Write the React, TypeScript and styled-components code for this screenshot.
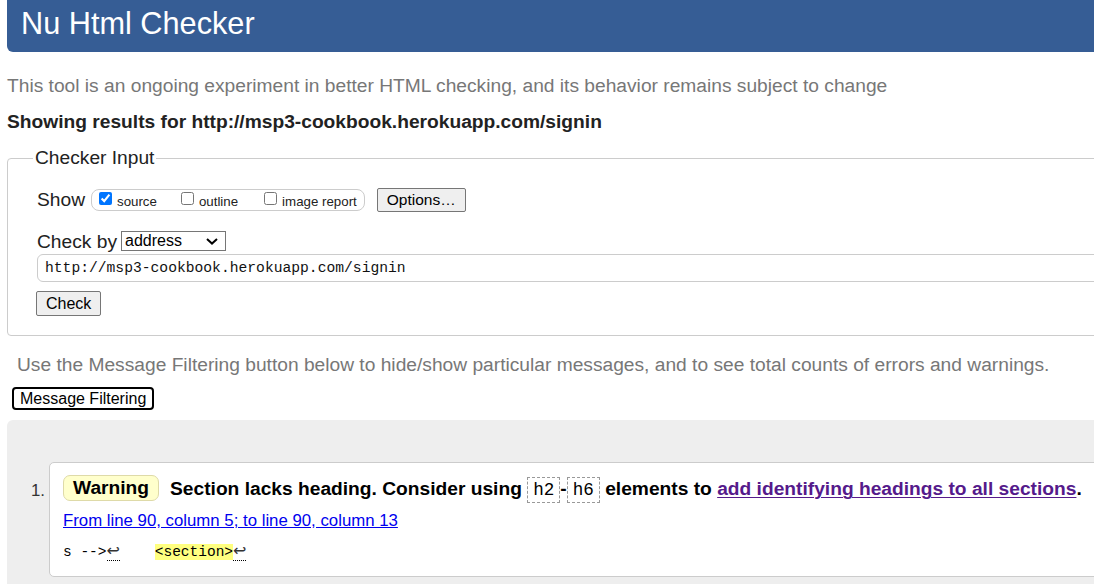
import { useState } from 'react'
import styled, { createGlobalStyle } from 'styled-components'

const GlobalStyle = createGlobalStyle`
	html, body {
		margin: 0;
		padding: 0;
		background: #fff;
		overflow: hidden;
	}
	body {
		font-family: 'Liberation Sans', Arial, sans-serif;
		color: #222;
	}
`

const sans = `'Liberation Sans', Arial, sans-serif`
const mono = `'Liberation Mono', 'DejaVu Sans Mono', monospace`

const Page = styled.div`
	width: 1130px;
	padding-left: 7px;
`

const Header = styled.h1`
	margin: 0;
	height: 52px;
	background: #365d95;
	border-radius: 0 0 0 6px;
	color: #fff;
	font: 400 30.7px/48px ${sans};
	padding-left: 14px;
`

const Intro = styled.p`
	margin: 23px 0 0;
	font: 400 19.2px/22px ${sans};
	color: #777;
`

const ResultsFor = styled.p`
	margin: 14px 0 0;
	font: 700 19.2px/22px ${sans};
	color: #222;
`

const Fieldset = styled.fieldset`
	margin: 14px 0 0;
	padding: 19px 0 19px 29px;
	border: 1px solid #ccc;
	border-radius: 4px;
	min-inline-size: 0;
`

const Legend = styled.legend`
	font: 400 19.2px/22px ${sans};
	color: #222;
	padding: 0 2px;
	margin-left: -4px;
`

const Row = styled.div`
	display: flex;
	align-items: center;
	height: 24px;
`

const FieldLabel = styled.span<{ $shift?: number }>`
	font: 400 19.2px/22px ${sans};
	color: #222;
	position: relative;
	top: ${({ $shift }) => $shift ?? 0}px;
`

const ShowGroup = styled.div`
	display: flex;
	align-items: center;
	box-sizing: border-box;
	height: 22px;
	border: 1px solid #ccc;
	border-radius: 8px;
	padding: 0 7px;
	margin-left: 6px;
`

const CheckItem = styled.label<{ $gap: number }>`
	display: inline-flex;
	align-items: center;
	font: 400 13.3px/16px ${sans};
	color: #222;
	margin-right: ${({ $gap }) => $gap}px;
	input {
		width: 13px;
		height: 13px;
		margin: -3px 5px 0 0;
		accent-color: #0075ff;
	}
	span {
		padding-top: 4px;
	}
`

const NativeButton = styled.button`
	box-sizing: border-box;
	font: 400 16px/20px ${sans};
	color: #000;
	background: #efefef;
	border: 1px solid #767676;
	border-radius: 2px;
	padding: 0 9px;
	height: 25px;
`

const OptionsButton = styled(NativeButton)`
	margin-left: 12px;
	height: 24px;
	font-size: 15.5px;
`

const CheckByRow = styled(Row)`
	margin-top: 18px;
	height: 22px;
`

const SelectWrap = styled.div`
	position: relative;
	display: inline-block;
	margin-left: 4px;
`

const Select = styled.select`
	appearance: none;
	display: block;
	box-sizing: border-box;
	width: 105px;
	height: 20px;
	font: 400 16px/18px ${sans};
	color: #000;
	background: #fff;
	border: 1px solid #767676;
	border-radius: 0;
	padding: 0 0 0 3px;
	margin: 0;
`

const Chevron = styled.svg`
	position: absolute;
	right: 8px;
	top: 7px;
	pointer-events: none;
`

const UrlInput = styled.input`
	display: block;
	box-sizing: border-box;
	width: 1100px;
	height: 28px;
	margin: 2px 0 0;
	padding: 0 7px;
	border: 1px solid #ccc;
	border-radius: 6px;
	font: 400 14.67px/26px ${mono};
	color: #111;
	outline: none;
`

const CheckButton = styled(NativeButton)`
	display: block;
	margin: 9px 0 0 -1px;
`

const FilterHint = styled.p`
	margin: 18px 0 0 10px;
	font: 400 19.2px/22px ${sans};
	color: #777;
`

const FilterButton = styled.button`
	display: block;
	box-sizing: border-box;
	margin: 11px 0 0 5px;
	height: 23px;
	padding: 0 6px;
	font: 400 16px/19px ${sans};
	color: #000;
	background: #fff;
	border: 2px solid #000;
	border-radius: 4px;
`

const Results = styled.div`
	margin-top: 10px;
	background: #eee;
	border-radius: 6px 0 0 0;
	padding: 42px 0 10px 42px;
	min-height: 140px;
`

const MessageList = styled.ol`
	margin: 0;
	padding: 0;
	list-style: none;
`

const MessageItem = styled.li`
	display: flex;
	align-items: flex-start;
`

const ItemNumber = styled.span`
	width: 18px;
	margin-left: -18px;
	padding-top: 19px;
	font: 400 16.8px/20px ${sans};
	color: #333;
`

const Card = styled.div`
	flex: 1;
	background: #fff;
	border: 1px solid #ccc;
	border-radius: 5px;
	padding: 12px 13px 14px;
`

const MessageLine = styled.p`
	margin: 0;
	display: flex;
	align-items: center;
	height: 28px;
	font: 700 19.2px/22px ${sans};
	color: #000;
	white-space: pre;
`

const Badge = styled.strong`
	align-self: flex-start;
	box-sizing: border-box;
	height: 26px;
	background: #ffffcc;
	border: 1px solid #dedaa8;
	border-radius: 7px;
	padding: 1px 9px 0;
	margin-right: 11px;
	font: 700 19.2px/22px ${sans};
	color: #000;
`

const CodeTag = styled.code`
	align-self: flex-end;
	box-sizing: border-box;
	height: 26px;
	border: 1px dashed #999;
	padding: 0 5px;
	font: 400 17.6px/24px ${mono};
	color: #000;
`

const HelpLink = styled.a`
	color: #551a8b;
	text-decoration: underline;
	text-decoration-thickness: 1px;
	text-underline-offset: 2px;
`

const Location = styled.a`
	display: inline-block;
	margin-top: 8px;
	font: 400 16.8px/20px ${sans};
	color: #0000ee;
	text-decoration: underline;
`

const Extract = styled.pre`
	margin: 10px 0 0;
	font: 400 14.5px/20px ${mono};
	color: #000;
`

const LineBreak = styled.span`
	border-bottom: 1px dotted #000;
	color: #333;
	font-family: 'DejaVu Sans', sans-serif;
	font-size: 16px;
`

const Highlight = styled.b`
	font-weight: 400;
	background: #ffff80;
`

export default function App() {
	const [show, setShow] = useState({ source: true, outline: false, image: false })

	return (
		<Page>
			<GlobalStyle />
			<Header>Nu Html Checker</Header>
			<Intro>
				This tool is an ongoing experiment in better HTML checking, and its behavior remains
				subject to change
			</Intro>
			<ResultsFor>Showing results for http://msp3-cookbook.herokuapp.com/signin</ResultsFor>

			<Fieldset>
				<Legend>Checker Input</Legend>
				<Row>
					<FieldLabel>Show</FieldLabel>
					<ShowGroup>
						<CheckItem $gap={24}>
							<input
								type="checkbox"
								checked={show.source}
								onChange={() => setShow({ ...show, source: !show.source })}
							/>
							<span>source</span>
						</CheckItem>
						<CheckItem $gap={26}>
							<input
								type="checkbox"
								checked={show.outline}
								onChange={() => setShow({ ...show, outline: !show.outline })}
							/>
							<span>outline</span>
						</CheckItem>
						<CheckItem $gap={0}>
							<input
								type="checkbox"
								checked={show.image}
								onChange={() => setShow({ ...show, image: !show.image })}
							/>
							<span>image report</span>
						</CheckItem>
					</ShowGroup>
					<OptionsButton>Options…</OptionsButton>
				</Row>
				<CheckByRow>
					<FieldLabel $shift={1}>Check by</FieldLabel>
					<SelectWrap>
						<Select defaultValue="address">
							<option value="address">address</option>
							<option value="file">file upload</option>
							<option value="text">text input</option>
						</Select>
						<Chevron width="12" height="7" viewBox="0 0 12 7">
							<path d="M1 1l5 4.6L11 1" fill="none" stroke="#000" strokeWidth="2" />
						</Chevron>
					</SelectWrap>
				</CheckByRow>
				<UrlInput defaultValue="http://msp3-cookbook.herokuapp.com/signin" />
				<CheckButton>Check</CheckButton>
			</Fieldset>

			<FilterHint>
				Use the Message Filtering button below to hide/show particular messages, and to see
				total counts of errors and warnings.
			</FilterHint>
			<FilterButton>Message Filtering</FilterButton>

			<Results>
				<MessageList>
					<MessageItem>
						<ItemNumber>1.</ItemNumber>
						<Card>
							<MessageLine>
								<Badge>Warning</Badge>
								{'Section lacks heading. Consider using '}
								<CodeTag>h2</CodeTag>
								-
								<CodeTag>h6</CodeTag>
								{' elements to '}
								<HelpLink href="#">add identifying headings to all sections</HelpLink>.
							</MessageLine>
							<Location href="#">From line 90, column 5; to line 90, column 13</Location>
							<Extract>
								{'s -->'}
								<LineBreak>↩</LineBreak>
								{'    '}
								<Highlight>{'<section>'}</Highlight>
								<LineBreak>↩</LineBreak>
							</Extract>
						</Card>
					</MessageItem>
				</MessageList>
			</Results>
		</Page>
	)
}
